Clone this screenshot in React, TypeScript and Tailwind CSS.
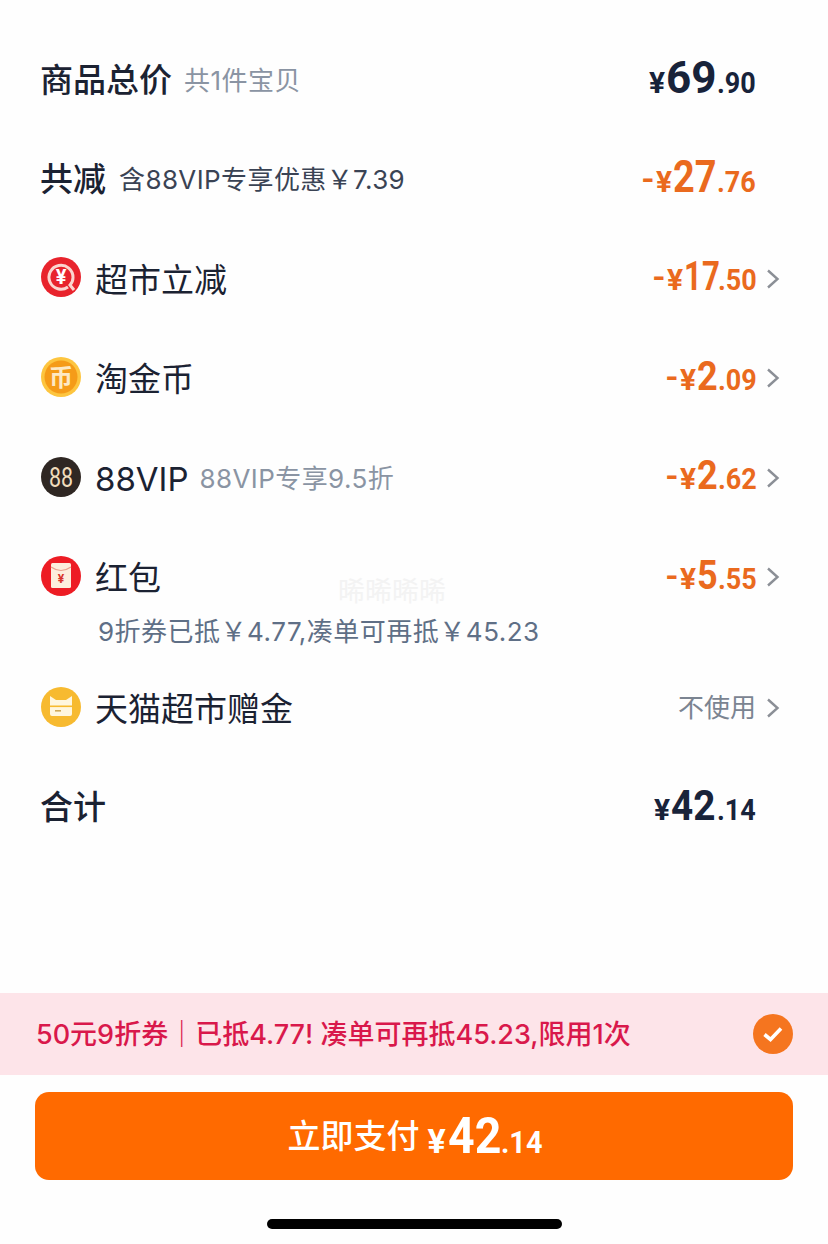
const sans = { fontFamily: 'Inter, "Noto Sans CJK SC", sans-serif' };
const cjk = { fontFamily: '"Noto Sans CJK SC", sans-serif' };
const num = { fontFamily: 'Roboto, "Noto Sans CJK SC", sans-serif' };

function Chevron() {
  return (
    <svg width="14" height="22" viewBox="0 0 14 22" className="ml-[10px] shrink-0">
      <path d="M2 2.5 L11.5 11 L2 19.5" fill="none" stroke="#8b8f96" strokeWidth="2.4" />
    </svg>
  );
}

// squeezed digits: the installed fonts have no DIN-like cut, so width is set per segment
function Seg({ width, fit, size, children }: { width: string; fit: string; size: string; children: React.ReactNode }) {
  return (
    <span className={`inline-block ${width}`}>
      <span className={`inline-block origin-left whitespace-nowrap leading-none ${fit} ${size}`}>{children}</span>
    </span>
  );
}

function Price({
  minus,
  value,
  cents,
  color,
  valueWidth,
  valueFit,
  valueSize,
}: {
  minus?: boolean;
  value: string;
  cents: string;
  color: string;
  valueWidth: string;
  valueFit: string;
  valueSize: string;
}) {
  return (
    <div className={`-mt-[4px] flex items-baseline font-bold ${color}`} style={num}>
      {minus && <span className="mr-[2px] text-[36px] font-medium leading-none">-</span>}
      <span className="mr-[1px] text-[30px] leading-none">¥</span>
      <Seg width={valueWidth} fit={valueFit} size={valueSize}>{value}</Seg>
      <Seg width="w-[38px]" fit="scale-x-[0.93]" size="text-[29px]">.{cents}</Seg>
    </div>
  );
}

function CutIcon() {
  return (
    <svg width="40" height="40" viewBox="0 0 40 40" className="-mt-[3px] shrink-0">
      <circle cx="20" cy="20" r="20" fill="#e8232c" />
      <path d="M27 30 A12 12 0 1 1 32 20.5 Q32 25 29 28 L33 33" fill="none" stroke="#fbd5cf" strokeWidth="3" />
      <text x="20" y="27" textAnchor="middle" fontSize="20" fontWeight="700" fill="#fff" style={num}>¥</text>
    </svg>
  );
}

function CoinIcon() {
  return (
    <svg width="40" height="40" viewBox="0 0 40 40" className="-mt-[2px] shrink-0">
      <circle cx="20" cy="20" r="20" fill="#fdc53f" />
      <circle cx="20" cy="20" r="16.5" fill="#f59b18" />
      <text x="20" y="28.5" textAnchor="middle" fontSize="24" fontWeight="700" fill="#fde9c4" style={cjk}>币</text>
    </svg>
  );
}

function VipIcon() {
  return (
    <svg width="40" height="40" viewBox="0 0 40 40" className="-mt-[2px] shrink-0">
      <circle cx="20" cy="20" r="20" fill="#2f2723" />
      <text x="8" y="29.5" fontSize="27" fontWeight="400" fill="#f0dcbc" textLength="24" lengthAdjust="spacingAndGlyphs" style={num}>88</text>
    </svg>
  );
}

function RedPacketIcon() {
  return (
    <svg width="40" height="40" viewBox="0 0 40 40" className="-mt-[2px] shrink-0">
      <circle cx="20" cy="20" r="20" fill="#ed1c24" />
      <rect x="10" y="7" width="20" height="25" rx="1.5" fill="#fdeedd" />
      <path d="M10 11 Q20 18 30 11" fill="none" stroke="#eaa08c" strokeWidth="1.2" />
      <text x="20" y="27" textAnchor="middle" fontSize="12" fontWeight="700" fill="#d8342c" style={num}>¥</text>
    </svg>
  );
}

function GiftIcon() {
  return (
    <svg width="40" height="40" viewBox="0 0 40 40" className="-mt-[2px] shrink-0">
      <circle cx="20" cy="20" r="20" fill="#f7ba30" />
      <path d="M9 9 L15 13 H25 L31 9 V27 Q31 29 29 29 H11 Q9 29 9 27 Z" fill="#fff6df" />
      <rect x="9" y="18.5" width="22" height="1.6" fill="#f7ba30" />
      <rect x="14" y="23" width="6" height="1.6" fill="#cfa95a" />
    </svg>
  );
}

function Row({ icon, label, sub, children }: { icon: React.ReactNode; label: string; sub?: string; children: React.ReactNode }) {
  return (
    <div className="flex h-[99.5px] items-center pl-[41px] pr-[48px]">
      {icon}
      <span className="ml-[14px] mt-[3px] text-[33px] leading-none text-[#1b2232]">{label}</span>
      {sub && <span className="ml-[11px] mt-[2px] text-[26px] leading-none tracking-[0.4px] text-[#8a94a3]">{sub}</span>}
      <div className="ml-auto flex items-center">{children}</div>
    </div>
  );
}

const orange = 'text-[#ea6a1e]';
const navy = 'text-[#18233a]';

export default function App() {
  return (
    <div className="relative flex h-[1244px] w-[828px] flex-col overflow-hidden bg-[#fefefe]" style={sans}>
      <div className="pt-[30px]">
        <div className="flex h-[99.5px] items-center pl-[40px] pr-[73px]">
          <span className="mt-[2px] text-[33px] font-medium leading-none text-[#1b2232]">商品总价</span>
          <span className="ml-[12px] mt-[2px] text-[26px] leading-none tracking-[0.5px] text-[#8a94a3]">共1件宝贝</span>
          <div className="ml-auto">
            <Price value="69" cents="90" color={navy} valueWidth="w-[51px]" valueFit="scale-x-[1]" valueSize="text-[44px]" />
          </div>
        </div>
        <div className="flex h-[99.5px] items-center pl-[40px] pr-[73px]">
          <span className="mt-[1px] text-[33px] font-medium leading-none text-[#1b2232]">共减</span>
          <span className="ml-[13px] mt-[2px] text-[26px] leading-none tracking-[0.4px] text-[#3a4354]">含88VIP专享优惠￥7.39</span>
          <div className="ml-auto">
            <Price minus value="27" cents="76" color={orange} valueWidth="w-[44px]" valueFit="scale-x-[0.86]" valueSize="text-[44px]" />
          </div>
        </div>
        <Row icon={<CutIcon />} label="超市立减">
          <Price minus value="17" cents="50" color={orange} valueWidth="w-[34px]" valueFit="scale-x-[0.76]" valueSize="text-[41px]" />
          <Chevron />
        </Row>
        <Row icon={<CoinIcon />} label="淘金币">
          <Price minus value="2" cents="09" color={orange} valueWidth="w-[21px]" valueFit="scale-x-[0.88]" valueSize="text-[41px]" />
          <Chevron />
        </Row>
        <Row icon={<VipIcon />} label="88VIP" sub="88VIP专享9.5折">
          <Price minus value="2" cents="62" color={orange} valueWidth="w-[21px]" valueFit="scale-x-[0.88]" valueSize="text-[41px]" />
          <Chevron />
        </Row>
        <Row icon={<RedPacketIcon />} label="红包">
          <Price minus value="5" cents="55" color={orange} valueWidth="w-[21px]" valueFit="scale-x-[0.88]" valueSize="text-[41px]" />
          <Chevron />
        </Row>
        <div className="-mt-[15px] pl-[98px] text-[26px] leading-[40px] tracking-[0.5px] text-[#5f6f86]">9折券已抵￥4.77,凑单可再抵￥45.23</div>
        <div className="mt-[6px]">
          <Row icon={<GiftIcon />} label="天猫超市赠金">
            <span className="text-[26px] leading-none text-[#7b8491]">不使用</span>
            <Chevron />
          </Row>
        </div>
        <div className="flex h-[99.5px] items-center pl-[40px] pr-[73px]">
          <span className="text-[33px] font-medium leading-none text-[#1b2232]">合计</span>
          <div className="ml-auto">
            <Price value="42" cents="14" color={navy} valueWidth="w-[46px]" valueFit="scale-x-[0.9]" valueSize="text-[43px]" />
          </div>
        </div>
      </div>

      <div className="flex-1" />

      <div className="flex h-[82px] items-center justify-between bg-[#fde4e9] pl-[36px] pr-[35px]">
        <span className="text-[27px] font-medium leading-none text-[#d9184b]">50元9折券｜已抵4.77! 凑单可再抵45.23,限用1次</span>
        <svg width="40" height="40" viewBox="0 0 40 40">
          <circle cx="20" cy="20" r="20" fill="#f5751f" />
          <path d="M11.5 20.5 L17.5 25.5 L28 14.5" fill="none" stroke="#fff" strokeWidth="3.6" />
        </svg>
      </div>

      <div className="mx-[35px] mt-[17px] flex h-[88px] items-center justify-center rounded-[14px] bg-[#ff6a00] text-white">
        <span className="text-[33px] font-medium leading-none">立即支付</span>
        <div className="ml-[8px] flex items-baseline font-bold" style={num}>
          <span className="mr-[2px] text-[34px] leading-none">¥</span>
          <Seg width="w-[53px]" fit="scale-x-[0.93]" size="text-[50px]">42</Seg>
          <Seg width="w-[40px]" fit="scale-x-[0.9]" size="text-[32px]">.14</Seg>
        </div>
      </div>

      <div className="mb-[15px] mt-[39px] h-[10px] w-[295px] self-center rounded-full bg-black" />

      <div className="absolute left-[338px] top-[578px] text-[27px] leading-none text-[#f3f3f3]">晞晞晞晞</div>
    </div>
  );
}
